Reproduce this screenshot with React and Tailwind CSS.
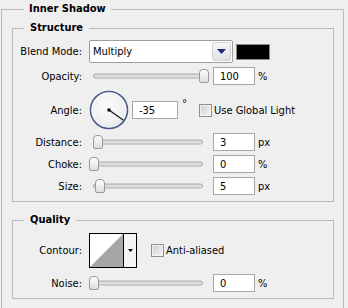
import React from "react";

const Label = ({ children }) => (
  <span className="w-[69px] shrink-0 text-right leading-[13px]">{children}</span>
);

const Slider = ({ thumb }) => (
  <div className="relative ml-[7px] h-full w-[120px] shrink-0">
    <div className="absolute left-[4px] right-[6px] top-1/2 h-[5px] -translate-y-1/2 rounded-full border border-[#a9a9a9] bg-[#e2e2e2] shadow-[inset_0_1px_0_#cfcfcf]" />
    <div
      className="absolute top-1/2 h-[14px] w-[10px] -translate-y-1/2 rounded-t-[4px] rounded-b-[2px] border border-[#999] bg-[linear-gradient(180deg,#ffffff,#dedede)]"
      style={{ left: thumb }}
    />
  </div>
);

const Field = ({ value, w = "w-[42px]", ml = "ml-[4px]" }) => (
  <div
    className={`${ml} ${w} flex h-[18px] shrink-0 items-center border border-[#a7a7a7] bg-white pl-[6px] leading-[13px]`}
  >
    {value}
  </div>
);

const Check = () => (
  <div className="h-[13px] w-[13px] shrink-0 border border-[#8e8e8e] bg-[linear-gradient(135deg,#cfcfcf,#f6f6f6)] shadow-[inset_0_0_0_1px_#f2f2f2]" />
);

const SliderRow = ({ label, thumb, value, unit, className }) => (
  <div className={`flex h-[18px] items-center ${className}`}>
    <Label>{label}</Label>
    <Slider thumb={thumb} />
    <Field value={value} />
    <span className="ml-[3px] leading-[13px]">{unit}</span>
  </div>
);

export default function App() {
  return (
    <div className="h-[308px] w-[348px] overflow-hidden bg-[#efefef] font-['DejaVu_Sans_Condensed','Liberation_Sans',sans-serif] text-[11px] text-black">
      <fieldset className="ml-[1px] w-[343px] border-x border-t border-[#bababa] pl-[10px] pr-[9px] pb-[20px]">
        <legend className="ml-[12px] px-[5px] font-bold leading-[18px]">Inner Shadow</legend>

        <fieldset className="mt-[1px] border border-[#bababa] pb-[6px]">
          <legend className="ml-[11px] px-[6px] font-bold leading-[18px]">Structure</legend>

          <div className="flex h-[23px] items-center pt-0 mt-[3px]">
            <Label>Blend Mode:</Label>
            <div className="ml-[7px] flex h-[23px] w-[144px] shrink-0 items-center rounded-[2px] border border-[#9e9e9e] bg-white">
              <span className="flex-1 pl-[3px] leading-[13px]">Multiply</span>
              <div className="mr-[1px] flex h-[19px] w-[19px] items-center justify-center rounded-[2px] border border-[#d4d4d4] bg-[linear-gradient(180deg,#f6f6f6,#e2e2e2)]">
                <svg width="9" height="5" viewBox="0 0 9 5">
                  <polygon points="0,0 9,0 4.5,5" fill="#1c2a80" />
                </svg>
              </div>
            </div>
            <div className="ml-[3px] h-[16px] w-[34px] shrink-0 border border-[#8a8a8a] bg-black" />
          </div>

          <SliderRow label="Opacity:" thumb={110} value="100" unit="%" className="mt-[4px]" />

          <div className="mt-[5px] flex h-[40px] items-center">
            <Label>Angle:</Label>
            <div className="ml-[7px] h-[40px] w-[39px] shrink-0">
              <svg width="40" height="40" viewBox="0 0 40 40">
                <defs>
                  <radialGradient id="dg" cx="45%" cy="40%" r="60%">
                    <stop offset="0%" stopColor="#fbfbfb" />
                    <stop offset="80%" stopColor="#efefef" />
                    <stop offset="100%" stopColor="#d9dce4" />
                  </radialGradient>
                </defs>
                <circle cx="20" cy="20" r="18.5" fill="url(#dg)" stroke="#4a5b8c" strokeWidth="1.6" />
                <circle cx="20" cy="20" r="17" fill="none" stroke="#ffffff" strokeWidth="0.8" opacity="0.8" />
                <line x1="20" y1="20" x2="34.5" y2="30.2" stroke="#111" strokeWidth="1.1" />
                <rect x="18.5" y="18.5" width="3" height="3" fill="#000" />
              </svg>
            </div>
            <Field value="-35" w="w-[46px]" ml="ml-[4px]" />
            <span className="w-[21px] shrink-0 self-start pl-[4px] pt-[9px] leading-[10px]">°</span>
            <Check />
            <span className="ml-[2px] leading-[13px]">Use Global Light</span>
          </div>

          <SliderRow label="Distance:" thumb={4} value="3" unit="px" className="mt-[3px]" />
          <SliderRow label="Choke:" thumb={0} value="0" unit="%" className="mt-[4px]" />
          <SliderRow label="Size:" thumb={6} value="5" unit="px" className="mt-[4px]" />
        </fieldset>

        <fieldset className="mt-[9px] border border-[#bababa] pb-[6px]">
          <legend className="ml-[11px] px-[6px] font-bold leading-[18px]">Quality</legend>

          <div className="mt-[4px] flex h-[35px] items-center">
            <Label>Contour:</Label>
            <div className="ml-[7px] flex h-[35px] w-[48px] shrink-0 border border-black bg-white">
              <svg width="33" height="33" viewBox="0 0 33 33" className="shrink-0">
                <rect width="33" height="33" fill="#fff" />
                <polygon points="0,33 33,0 33,33" fill="#a6a6a6" />
              </svg>
              <div className="flex flex-1 items-center justify-center border-l border-black bg-[#f4f4f4]">
                <svg width="5" height="3" viewBox="0 0 5 3">
                  <polygon points="0,0 5,0 2.5,3" fill="#000" />
                </svg>
              </div>
            </div>
            <div className="ml-[14px]">
              <Check />
            </div>
            <span className="ml-[2px] leading-[13px]">Anti-aliased</span>
          </div>

          <SliderRow label="Noise:" thumb={0} value="0" unit="%" className="mt-[6px]" />
        </fieldset>
      </fieldset>
    </div>
  );
}
